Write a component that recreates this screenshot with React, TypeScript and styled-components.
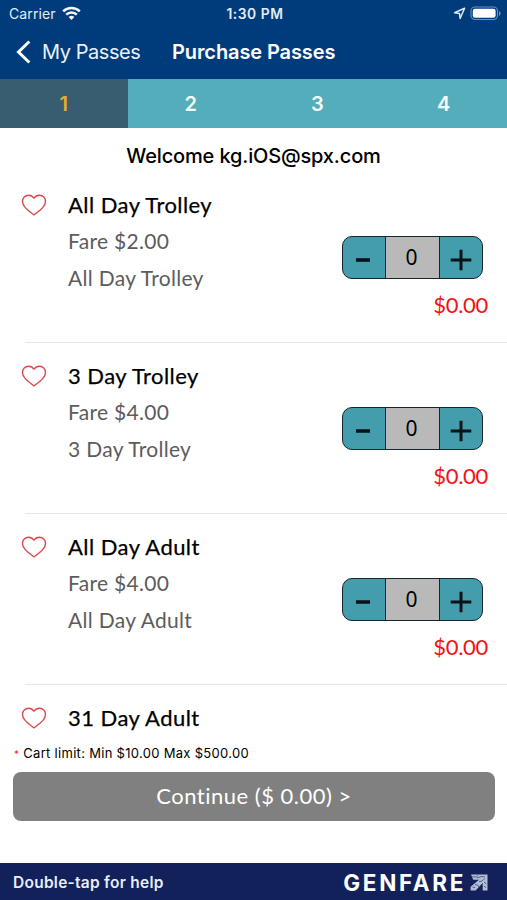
import React from "react";
import styled, { createGlobalStyle } from "styled-components";

const GlobalStyle = createGlobalStyle`
  * { box-sizing: border-box; }
  body { margin: 0; background: #fff; }
  button { font: inherit; color: inherit; border: 0; padding: 0; background: none; }
`;

const Screen = styled.div`
  display: flex;
  flex-direction: column;
  width: 507px;
  height: 900px;
  overflow: hidden;
  background: #fff;
  color: #000;
  font-family: Inter, sans-serif;
  white-space: nowrap;
`;

const StatusBar = styled.div`
  display: grid;
  grid-template-columns: 1fr auto 1fr;
  align-items: center;
  height: 28px;
  padding: 0 6px 0 9px;
  background: #003c7c;
  color: #e4edf7;
  font-size: 14px;
`;

const Carrier = styled.div`
  display: flex;
  align-items: center;
  gap: 6px;
  height: 26px;
  padding-bottom: 2px;
  letter-spacing: 0.1px;
`;

const Clock = styled.div`
  font-weight: 600;
  font-size: 13.8px;
  letter-spacing: 0.55px;
`;

const StatusIcons = styled.div`
  display: flex;
  align-items: center;
  justify-content: flex-end;
  gap: 4px;
  height: 26px;
  padding-bottom: 2px;
`;

const NavBar = styled.header`
  display: flex;
  align-items: center;
  height: 51px;
  padding: 0 0 3px 16px;
  background: #003c7c;
  color: #fff;
`;

const BackButton = styled.button`
  display: flex;
  align-items: center;
  gap: 11px;
  width: 156px;
  color: #e9f1fa;
  font-size: 20px;
  letter-spacing: -0.45px;
`;

const NavTitle = styled.h1`
  margin: 0;
  font-size: 20px;
  font-weight: 600;
  letter-spacing: -0.1px;
`;

const Steps = styled.nav`
  display: grid;
  grid-template-columns: 127.5px repeat(3, 1fr);
  flex: none;
  height: 49px;
  background: #54adba;
`;

const Step = styled.div<{ $active?: boolean }>`
  display: flex;
  align-items: center;
  justify-content: center;
  background: ${(p) => (p.$active ? "#385d70" : "transparent")};
  color: ${(p) => (p.$active ? "#e4b022" : "#f4fbfc")};
  font-size: 20px;
  font-weight: 600;
`;

const Welcome = styled.h2`
  flex: none;
  height: 44px;
  margin: 0;
  padding-top: 15px;
  text-align: center;
  font-size: 20px;
  line-height: 26px;
  font-weight: 500;
  letter-spacing: -0.15px;
`;

const PassList = styled.ul`
  flex: none;
  height: 564px;
  margin: 0;
  padding: 0;
  overflow: hidden;
  list-style: none;
`;

const PassRow = styled.li`
  display: flex;
  height: 171px;
  padding: 18px 19px 0 21px;
  font-family: Lato, sans-serif;
  background: linear-gradient(#e6e6e6, #e6e6e6) 25px 100% / 100% 1px no-repeat;
`;

const Favorite = styled.button`
  display: flex;
  align-items: center;
  width: 47px;
  height: 30px;
`;

const PassInfo = styled.div`
  flex: 1;
`;

const PassName = styled.h3`
  margin: 1px 0 0;
  font-size: 22px;
  line-height: 28px;
  font-weight: 400;
  letter-spacing: 0.45px;
  -webkit-text-stroke: 0.25px currentColor;
`;

const PassLine = styled.p`
  margin: 8px 0 0;
  font-size: 21px;
  line-height: 28px;
  letter-spacing: 0.3px;
  color: #5c5c5c;

  & + & {
    margin-top: 9px;
  }
`;

const Purchase = styled.div`
  display: flex;
  flex-direction: column;
  align-items: flex-end;
  padding-top: 46px;
`;

const Stepper = styled.div`
  display: grid;
  grid-template-columns: 42px 55px 1fr;
  width: 141px;
  height: 43px;
  margin-right: 5px;
  border: 1.5px solid #16262a;
  border-radius: 10px;
  overflow: hidden;
  background: #439dad;
`;

const StepperButton = styled.button`
  display: flex;
  align-items: center;
  justify-content: center;
  padding-top: 5px;
`;

const Quantity = styled.output`
  display: flex;
  align-items: center;
  justify-content: center;
  padding: 0 2px 1px 0;
  border: solid #16262a;
  border-width: 0 1.5px;
  background: #b9b9b9;
  font-family: "Noto Sans", sans-serif;
  font-size: 21px;
`;

const Amount = styled.div`
  margin-top: 12px;
  color: #f01414;
  font-size: 22px;
  line-height: 28px;
  letter-spacing: -0.3px;
`;

const CartLimit = styled.p`
  flex: none;
  height: 36px;
  margin: 0;
  padding: 8px 0 0 14px;
  font-size: 13px;
  line-height: 18px;
  letter-spacing: 0.3px;
`;

const Asterisk = styled.span`
  color: #ff3020;
  font-size: 10px;
`;

const ContinueButton = styled.button`
  flex: none;
  width: 482px;
  height: 49px;
  margin-left: 13px;
  padding-bottom: 2px;
  border-radius: 8px;
  background: #808080;
  color: #fff;
  font-family: Lato, sans-serif;
  font-size: 22px;
  letter-spacing: 0.5px;
`;

const Footer = styled.footer`
  display: flex;
  align-items: center;
  justify-content: space-between;
  height: 37px;
  margin-top: auto;
  padding: 1px 19px 0 13px;
  background: #12215a;
  color: #e9eef8;
  font-size: 15.5px;
  font-weight: 600;
  letter-spacing: 0.26px;
`;

const Brand = styled.div`
  display: flex;
  align-items: center;
  gap: 4px;
  color: #fff;
  font-size: 22.5px;
  font-weight: 700;
  letter-spacing: 2.65px;
`;

const WifiIcon = () => (
  <svg width="19" height="15" viewBox="0 0 19 15" fill="none" stroke="#f2f7fc" strokeWidth="2.5">
    <path d="M1.2 5.4a12 12 0 0 1 16.6 0" />
    <path d="M4.2 8.7a7.6 7.6 0 0 1 10.6 0" />
    <path d="M6.6 11.1a4.2 4.2 0 0 1 5.8 0L9.5 14Z" fill="#f2f7fc" stroke="none" />
  </svg>
);

const LocationIcon = () => (
  <svg width="13" height="13" viewBox="0 0 13 13" fill="none" stroke="#dbe7f3" strokeWidth="1.5" strokeLinejoin="round">
    <path d="M11.6 1.2 1.5 5.7l5 .8.6 5Z" />
  </svg>
);

const BatteryIcon = () => (
  <svg width="31" height="15" viewBox="0 0 31 15">
    <rect x="1" y="1" width="26.5" height="12.5" rx="4" fill="none" stroke="#6c91b8" strokeWidth="1.1" />
    <rect x="2.8" y="2.8" width="22.8" height="9" rx="2.2" fill="#fff" />
    <path d="M29 5v5q1.6-.8 1.6-2.5T29 5Z" fill="#6c91b8" />
  </svg>
);

const BackIcon = () => (
  <svg width="15" height="24" viewBox="0 0 15 24" fill="none" stroke="#fff" strokeWidth="3">
    <path d="M13.3 1.5 2.5 12l10.8 10.5" />
  </svg>
);

const HeartIcon = () => (
  <svg width="26" height="22" viewBox="0 0 26 22" fill="none" stroke="#dc4a50" strokeWidth="1.4" strokeLinejoin="round">
    <path d="M13 4.2C11.8 2.2 9.8 1.2 7.5 1.2 4.1 1.2 1.5 3.8 1.5 7.4c0 5.3 5.5 8.8 11.5 13.5 6-4.7 11.5-8.2 11.5-13.5 0-3.6-2.6-6.2-6-6.2-2.3 0-4.3 1-5.5 3Z" />
  </svg>
);

const MinusIcon = () => (
  <svg width="16" height="22" viewBox="0 0 16 22">
    <path d="M0 11h14" stroke="#071316" strokeWidth="3.6" />
  </svg>
);

const PlusIcon = () => (
  <svg width="22" height="22" viewBox="0 0 22 22">
    <path d="M.7 11h20.6M11 .7v20.6" stroke="#071316" strokeWidth="3" />
  </svg>
);

const BrandMark = () => (
  <svg width="18" height="17" viewBox="0 0 18 17" fill="none">
    <path d="M1 .5h16.5v16h-4.8V9L5.6 16.5H.6v-3.8L9 5.8H3.2Z" fill="#b4bdd6" />
    <path d="m2 2.8 4 .2 2-1.5M7 4l4-1.4 4 .2M5 10.6l3 .6 1 2M9 7.5l3-.3 3-3M2.5 13l2.6.6M14 8l2.4 2M14 12l2 1.6" stroke="#3c4a7c" strokeWidth=".8" />
  </svg>
);

const passes = [
  { name: "All Day Trolley", fare: "$2.00" },
  { name: "3 Day Trolley", fare: "$4.00" },
  { name: "All Day Adult", fare: "$4.00" },
  { name: "31 Day Adult", fare: "" },
];

export default function App() {
  return (
    <>
      <GlobalStyle />
      <Screen>
        <StatusBar>
          <Carrier>Carrier <WifiIcon /></Carrier>
          <Clock>1:30 PM</Clock>
          <StatusIcons><LocationIcon /><BatteryIcon /></StatusIcons>
        </StatusBar>
        <NavBar>
          <BackButton><BackIcon />My Passes</BackButton>
          <NavTitle>Purchase Passes</NavTitle>
        </NavBar>
        <Steps>
          {[1, 2, 3, 4].map((n) => (
            <Step key={n} $active={n === 1}>{n}</Step>
          ))}
        </Steps>
        <Welcome>Welcome kg.iOS@spx.com</Welcome>
        <PassList>
          {passes.map((pass) => (
            <PassRow key={pass.name}>
              <Favorite aria-label="Favorite"><HeartIcon /></Favorite>
              <PassInfo>
                <PassName>{pass.name}</PassName>
                {pass.fare && (
                  <>
                    <PassLine>Fare {pass.fare}</PassLine>
                    <PassLine>{pass.name}</PassLine>
                  </>
                )}
              </PassInfo>
              {pass.fare && (
                <Purchase>
                  <Stepper>
                    <StepperButton aria-label="Remove"><MinusIcon /></StepperButton>
                    <Quantity>0</Quantity>
                    <StepperButton aria-label="Add"><PlusIcon /></StepperButton>
                  </Stepper>
                  <Amount>$0.00</Amount>
                </Purchase>
              )}
            </PassRow>
          ))}
        </PassList>
        <CartLimit><Asterisk>*</Asterisk> Cart limit: Min $10.00 Max $500.00</CartLimit>
        <ContinueButton>Continue ($ 0.00) &gt;</ContinueButton>
        <Footer>
          Double-tap for help
          <Brand>GENFARE<BrandMark /></Brand>
        </Footer>
      </Screen>
    </>
  );
}
